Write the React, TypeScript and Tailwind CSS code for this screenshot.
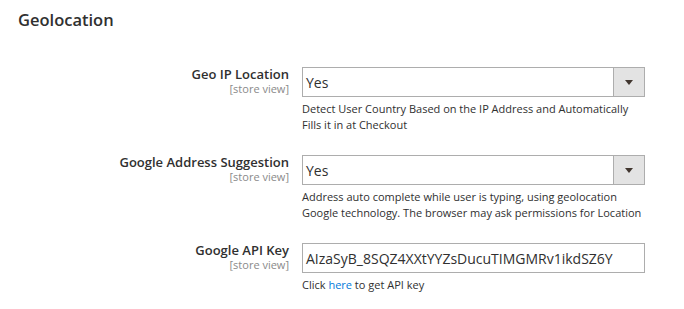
import React from 'react';

const StoreView = () => (
  <div className="mt-[1px] text-[11px] leading-[12px] text-[#8a8a8a]">[store view]</div>
);

const SelectBox = ({ value }: { value: string }) => (
  <div className="flex h-[30px] border border-[#adadad] bg-white">
    <div className="flex-1 flex items-center pl-[3px] text-[14px] text-[#303030]">{value}</div>
    <div className="w-[31px] flex items-center justify-center border-l border-[#adadad] bg-[#e3e3e3]">
      <svg width="8" height="5" viewBox="0 0 8 5">
        <path d="M0 0h8L4 5z" fill="#41362f" />
      </svg>
    </div>
  </div>
);

export default function App() {
  return (
    <div className="w-[684px] h-[309px] bg-white font-['Open_Sans',sans-serif] text-[#303030] overflow-hidden">
      <h2 className="pl-[18px] pt-[9px] text-[16.5px] leading-[22px] font-semibold text-[#303030]">Geolocation</h2>

      {/* Geo IP */}
      <div className="flex mt-[36px]">
        <div className="w-[289px] text-right">
          <div className="text-[13px] leading-[15px] font-semibold">Geo IP Location</div>
          <StoreView />
        </div>
        <div className="ml-[13px] w-[343px]">
          <SelectBox value="Yes" />
          <p className="mt-[4px] text-[11px] leading-[16px]">
            Detect User Country Based on the IP Address and Automatically Fills it in at Checkout
          </p>
        </div>
      </div>

      {/* Address suggestion */}
      <div className="flex mt-[22px]">
        <div className="w-[289px] text-right">
          <div className="text-[13px] leading-[15px] font-semibold">Google Address Suggestion</div>
          <StoreView />
        </div>
        <div className="ml-[13px] w-[343px]">
          <SelectBox value="Yes" />
          <p className="mt-[4px] text-[11px] leading-[16px]">
            Address auto complete while user is typing, using geolocation Google technology. The browser may ask permissions for Location
          </p>
        </div>
      </div>

      {/* API key */}
      <div className="flex mt-[22px]">
        <div className="w-[289px] text-right">
          <div className="text-[13px] leading-[15px] font-semibold">Google API Key</div>
          <StoreView />
        </div>
        <div className="ml-[13px] w-[343px]">
          <div className="h-[30px] border border-[#adadad] flex items-center pl-[3px] text-[14px]">
            AIzaSyB_8SQZ4XXtYYZsDucuTIMGMRv1ikdSZ6Y
          </div>
          <p className="mt-[4px] text-[11px] leading-[16px]">
            Click <a className="text-[#007bdb]">here</a> to get API key
          </p>
        </div>
      </div>
    </div>
  );
}
